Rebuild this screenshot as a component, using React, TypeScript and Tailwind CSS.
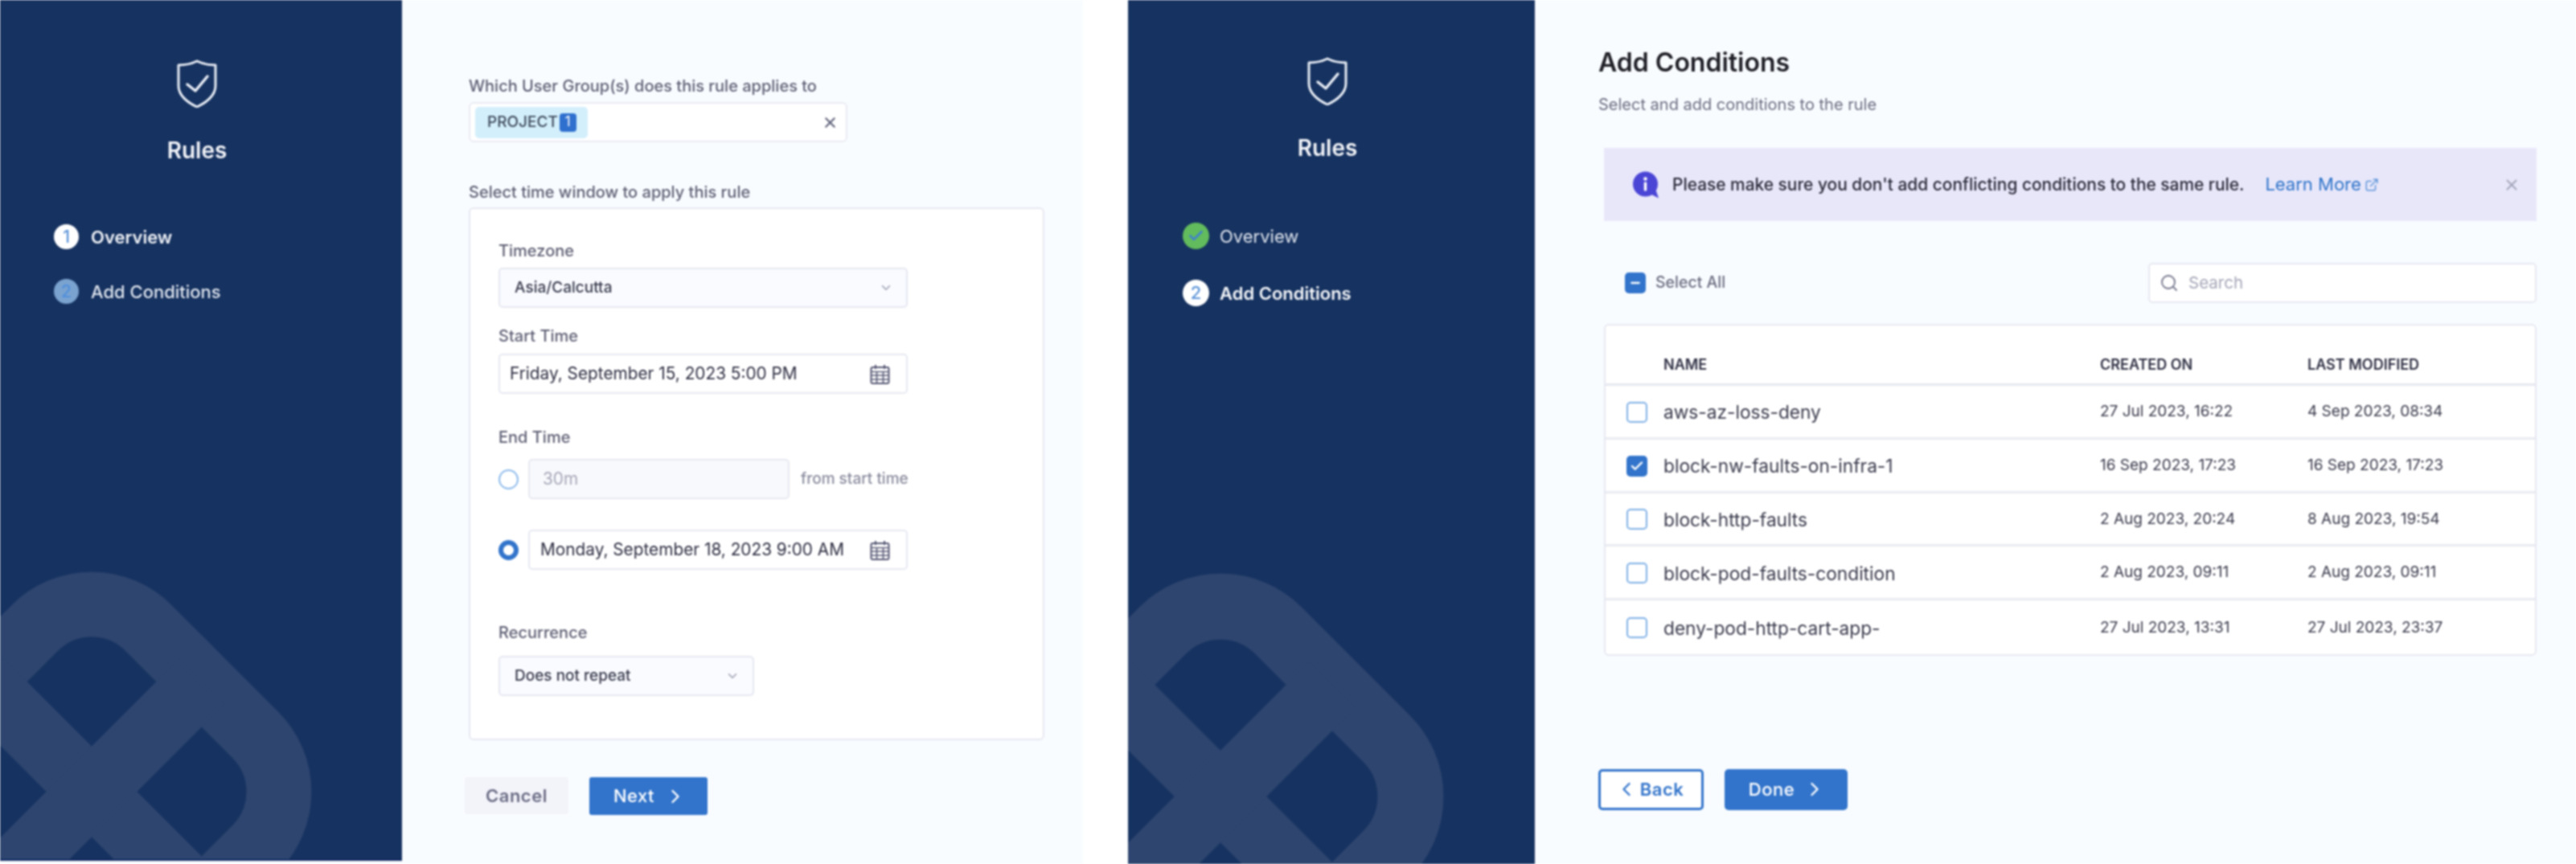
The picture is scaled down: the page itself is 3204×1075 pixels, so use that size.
import { ChevronDown, ChevronLeft, ChevronRight, Check, ExternalLink, Minus, Search, X } from "lucide-react";

const SANS = "font-['Inter','Liberation_Sans',sans-serif]";

function Shield() {
  return (
    <svg width="50" height="60" viewBox="0 0 50 60" fill="none" stroke="#e8edf5" strokeWidth="3" strokeLinejoin="round" strokeLinecap="round">
      <path d="M25 2 C31 5 40 7 48 7 V33 C48 45 36 54 25 59 C14 54 2 45 2 33 V7 C10 7 19 5 25 2 Z" />
      <path d="M13 31 L23 39 L38 21" strokeWidth="3.5" />
    </svg>
  );
}

function Watermark({ cx, cy, scale }: { cx: number; cy: number; scale: number }) {
  return (
    <svg className="absolute left-0 top-0" width="510" height="1075" viewBox="0 0 510 1075" fill="none" stroke="#2d456f">
      <g transform={`translate(${cx} ${cy}) scale(${scale}) rotate(45)`}>
        <rect x="-194" y="-194" width="388" height="388" rx="100" strokeWidth="81" />
        <line x1="-194" y1="0" x2="194" y2="0" strokeWidth="80" />
        <line x1="0" y1="-194" x2="0" y2="194" strokeWidth="80" />
      </g>
    </svg>
  );
}

function Sidebar({ width, step2 }: { width: string; step2: boolean }) {
  return (
    <aside className={`relative shrink-0 overflow-hidden bg-[#163260] ${width}`}>
      <Watermark cx={step2 ? 115 : 114} cy={step2 ? 991 : 985} scale={step2 ? 1.015 : 1} />
      <div className="relative flex flex-col">
        {step2 ? (
          <div className="flex flex-col items-center pr-[10px] pt-[71px]">
            <Shield />
            <div className="mt-[33px] text-[28px] font-semibold leading-[40px] text-[#f2f4f8]">Rules</div>
          </div>
        ) : (
          <div className="flex flex-col items-center pr-[10px] pt-[74px]">
            <Shield />
            <div className="mt-[33px] text-[28px] font-semibold leading-[40px] text-[#f2f4f8]">Rules</div>
          </div>
        )}
        {step2 ? (
          <div className="mt-[73px] flex flex-col gap-[38px] pl-[68px]">
            <div className="flex h-[33px] items-center gap-[13px]">
              <span className="flex size-[33px] items-center justify-center rounded-full bg-[#62bb5c]">
                <Check className="size-[21px] text-[#3f80d0]" strokeWidth={3} />
              </span>
              <span className="text-[22px] leading-[30px] text-[#dfe5ee]">Overview</span>
            </div>
            <div className="flex h-[33px] items-center gap-[13px]">
              <span className="flex size-[33px] items-center justify-center rounded-full bg-white text-[22px] font-medium text-[#5c94d8]">2</span>
              <span className="text-[22px] font-semibold leading-[30px] text-[#f5f7fa]">Add Conditions</span>
            </div>
          </div>
        ) : (
          <div className="mt-[72px] flex flex-col gap-[37px] pl-[67px]">
            <div className="flex h-[31px] items-center gap-[15px]">
              <span className="flex size-[31px] items-center justify-center rounded-full bg-white text-[21px] font-medium text-[#5c94d8]">1</span>
              <span className="text-[22px] font-semibold leading-[30px] text-[#eef1f6]">Overview</span>
            </div>
            <div className="flex h-[31px] items-center gap-[15px]">
              <span className="flex size-[31px] items-center justify-center rounded-full bg-[#7ba3d0] text-[21px] font-medium text-[#4f8fdc]">2</span>
              <span className="text-[22px] font-medium leading-[30px] text-[#dfe5ee]">Add Conditions</span>
            </div>
          </div>
        )}
      </div>
    </aside>
  );
}

function FieldLabel({ children, className = "" }: { children: string; className?: string }) {
  return <div className={`h-[28px] text-[20px] font-medium leading-[28px] text-[#5f6075] ${className}`}>{children}</div>;
}

function SelectBox({ text, width }: { text: string; width: string }) {
  return (
    <div className={`flex h-[50px] items-center justify-between rounded-[5px] border-2 border-[#e6e8f1] bg-[#f9fbff] pl-[18px] pr-[16px] ${width}`}>
      <span className="text-[19px] font-medium text-[#3a3b4d]">{text}</span>
      <ChevronDown className="size-[18px] text-[#9a9cae]" strokeWidth={2} />
    </div>
  );
}

function CalendarIcon() {
  return (
    <svg width="25" height="25" viewBox="0 0 25 25" fill="none" stroke="#565874" strokeWidth="2">
      <rect x="1.5" y="4" width="22" height="20" rx="2" />
      <path d="M1.5 9.5 H23.5 M1.5 14 H23.5 M1.5 19 H23.5 M8.5 9.5 V24 M16.5 9.5 V24" strokeWidth="1.6" />
      <path d="M7 1 V6 M18 1 V6" />
    </svg>
  );
}

function DateInput({ text, className }: { text: string; className: string }) {
  return (
    <div className={`flex h-[50px] items-center justify-between rounded-[5px] border-2 border-[#e6e8f1] bg-white pr-[20px] ${className}`}>
      <span className="text-[20.8px] leading-[28px] text-[#2f3044]">{text}</span>
      <CalendarIcon />
    </div>
  );
}

function OverviewPanel() {
  return (
    <section className="flex w-[847px] shrink-0 flex-col bg-[#f9fcff] pl-[83px] pt-[93px]">
      <FieldLabel>Which User Group(s) does this rule applies to</FieldLabel>
      <div className="mt-[6px] flex h-[50px] w-[471px] items-center justify-between rounded-[6px] border-2 border-[#e9ebf3] bg-white pl-[6px] pr-[9px]">
        <div className="flex h-[39px] w-[140px] items-center rounded-[5px] bg-[#d3effb] pl-[15px]">
          <span className="text-[19px] font-medium text-[#3f4a5e]">PROJECT</span>
          <span className="ml-[2px] flex h-[23px] w-[21px] items-center justify-center rounded-[4px] bg-[#2f70cf] text-[17px] text-white">1</span>
        </div>
        <X className="size-[21px] text-[#60627a]" strokeWidth={2.4} />
      </div>
      <FieldLabel className="mt-[48px]">Select time window to apply this rule</FieldLabel>
      <div className="mt-[5px] flex h-[663px] w-[716px] flex-col rounded-[6px] border-2 border-[#e6e8f1] bg-white pl-[35px] pt-[38px]">
        <FieldLabel>Timezone</FieldLabel>
        <div className="mt-[7px]">
          <SelectBox text="Asia/Calcutta" width="w-[509px]" />
        </div>
        <FieldLabel className="mt-[21px]">Start Time</FieldLabel>
        <div className="mt-[8px]">
          <DateInput text="Friday, September 15, 2023 5:00 PM" className="w-[509px] pl-[12px]" />
        </div>
        <FieldLabel className="mt-[40px]">End Time</FieldLabel>
        <div className="mt-[13px] flex items-center">
          <span className="block size-[25px] shrink-0 rounded-full border-[2px] border-[#8fbcec] bg-white" />
          <div className="ml-[12px] flex h-[50px] w-[325px] items-center rounded-[5px] border-2 border-[#e6e8f1] bg-[#f8f9fc] pl-[16px] text-[20.8px] text-[#a5a7b8]">30m</div>
          <span className="ml-[14px] text-[19px] font-medium text-[#8a8c9e]">from start time</span>
        </div>
        <div className="mt-[38px] flex items-center">
          <span className="block size-[25px] shrink-0 rounded-full border-[6px] border-[#3274cb] bg-white" />
          <DateInput text="Monday, September 18, 2023 9:00 AM" className="ml-[12px] w-[472px] pl-[13px]" />
        </div>
        <FieldLabel className="mt-[64px]">Recurrence</FieldLabel>
        <div className="mt-[15px]">
          <SelectBox text="Does not repeat" width="w-[318px]" />
        </div>
      </div>
      <div className="-ml-[5px] mt-[46px] flex gap-[26px]">
        <div className="flex h-[46px] w-[129px] items-center justify-center rounded-[3px] bg-[#f3f3fa] text-[22px] font-semibold tracking-[0.5px] text-[#6b6d85]">Cancel</div>
        <div className="flex h-[47px] w-[147px] items-center justify-center gap-[12px] rounded-[3px] bg-[#3274cb] pl-[4px] text-[22px] font-medium tracking-[0.5px] text-white">
          Next
          <ChevronRight className="size-[28px]" strokeWidth={2} />
        </div>
      </div>
    </section>
  );
}

function Box({ checked }: { checked?: boolean }) {
  return checked ? (
    <span className="flex size-[26px] items-center justify-center rounded-[5px] bg-[#3274cb]">
      <Check className="size-[18px] text-white" strokeWidth={3.2} />
    </span>
  ) : (
    <span className="block size-[26px] rounded-[5px] border-[2px] border-[#7fb0e6] bg-white" />
  );
}

const rows = [
  ["aws-az-loss-deny", "27 Jul 2023, 16:22", "4 Sep 2023, 08:34", false],
  ["block-nw-faults-on-infra-1", "16 Sep 2023, 17:23", "16 Sep 2023, 17:23", true],
  ["block-http-faults", "2 Aug 2023, 20:24", "8 Aug 2023, 19:54", false],
  ["block-pod-faults-condition", "2 Aug 2023, 09:11", "2 Aug 2023, 09:11", false],
  ["deny-pod-http-cart-app-", "27 Jul 2023, 13:31", "27 Jul 2023, 23:37", false],
] as const;

function InfoIcon() {
  return (
    <svg width="34" height="34" viewBox="0 0 34 34">
      <circle cx="16.5" cy="16" r="15.5" fill="#4b45d6" />
      <path d="M22 28 L33 33.5 L29 22 Z" fill="#4b45d6" />
      <circle cx="16.5" cy="9.5" r="2.2" fill="#fff" />
      <rect x="14.8" y="13.5" width="3.4" height="11" rx="1" fill="#fff" />
    </svg>
  );
}

function ConditionsPanel() {
  return (
    <section className="flex min-w-0 flex-1 flex-col bg-[#f9fcff] pl-[79px] pt-[58px]">
      <h1 className="h-[40px] text-[32px] font-semibold leading-[40px] text-[#1f1f27]">Add Conditions</h1>
      <p className="mt-[18px] h-[28px] text-[20px] leading-[28px] text-[#6b6d80]">Select and add conditions to the rule</p>
      <div className="ml-[7px] mt-[40px] flex h-[91px] w-[1160px] items-center bg-[#e8e7fa] pl-[35px] pr-[20px]">
        <InfoIcon />
        <span className="ml-[16px] text-[20.9px] font-medium text-[#2a2b3a]">Please make sure you don't add conflicting conditions to the same rule.</span>
        <span className="ml-[26px] text-[22px] text-[#2f74c9]">Learn More</span>
        <ExternalLink className="ml-[4px] size-[18px] text-[#5b94d8]" strokeWidth={2} />
        <X className="ml-auto size-[22px] text-[#a3a5b8]" strokeWidth={2} />
      </div>
      <div className="ml-[7px] mt-[52px] flex h-[50px] w-[1160px] items-center pl-[26px]">
        <span className="flex size-[26px] items-center justify-center rounded-[5px] bg-[#3274cb]">
          <Minus className="size-[16px] text-white" strokeWidth={3.5} />
        </span>
        <span className="ml-[12px] text-[19.5px] font-medium text-[#6b6d80]">Select All</span>
        <div className="ml-auto flex h-[50px] w-[483px] items-center rounded-[5px] border-2 border-[#e6e8f1] bg-white pl-[12px]">
          <Search className="size-[24px] text-[#72748a]" strokeWidth={1.8} />
          <span className="ml-[12px] text-[20.5px] text-[#a5a7b8]">Search</span>
        </div>
      </div>
      <div className="ml-[7px] mt-[26px] w-[1160px] overflow-hidden rounded-[6px] border-2 border-[#e6e8f1] bg-white">
        <div className="grid h-[75px] grid-cols-[72px_543px_258px_1fr] items-end border-b-[3px] border-[#e6e8f1] pb-[11px] text-[18px] font-semibold leading-[24px] text-[#2f3044]">
          <span />
          <span>NAME</span>
          <span>CREATED ON</span>
          <span>LAST MODIFIED</span>
        </div>
        {rows.map(([name, created, modified, checked], i) => (
          <div key={name} className={`grid h-[66.75px] grid-cols-[72px_543px_258px_1fr] items-center ${i < rows.length - 1 ? "border-b-[3px] border-[#e9ebf2]" : ""}`}>
            <span className="pl-[26px] pt-[2px]">
              <Box checked={checked} />
            </span>
            <span className="pt-[3px] text-[22.7px] text-[#3a3b4d]">{name}</span>
            <span className="pt-[1px] text-[19px] text-[#3a3b4d]">{created}</span>
            <span className="pt-[1px] text-[19px] text-[#3a3b4d]">{modified}</span>
          </div>
        ))}
      </div>
      <div className="mt-[141px] flex gap-[26px]">
        <div className="flex h-[51px] w-[131px] items-center justify-center gap-[3px] rounded-[5px] border-[3px] border-[#3274cb] bg-white pr-[4px] text-[22px] font-semibold tracking-[0.5px] text-[#3274cb]">
          <ChevronLeft className="size-[28px]" strokeWidth={2} />
          Back
        </div>
        <div className="flex h-[51px] w-[153px] items-center justify-center gap-[11px] rounded-[5px] bg-[#3274cb] pl-[3px] text-[22px] font-medium tracking-[0.5px] text-white">
          Done
          <ChevronRight className="size-[28px]" strokeWidth={2} />
        </div>
      </div>
    </section>
  );
}

export default function App() {
  return (
    <div className={`flex h-[1075px] w-[3204px] overflow-hidden bg-white blur-[0.8px] ${SANS}`}>
      <div className="w-[500px] shrink-0 bg-[#f9fcff] pb-[4px]">
        <div className="h-full border-b-[2px] border-[#0f2660]">
          <Sidebar width="h-full w-[500px]" step2={false} />
        </div>
      </div>
      <OverviewPanel />
      <div className="w-[56px] shrink-0 bg-white" />
      <Sidebar width="w-[506px]" step2 />
      <ConditionsPanel />
    </div>
  );
}
